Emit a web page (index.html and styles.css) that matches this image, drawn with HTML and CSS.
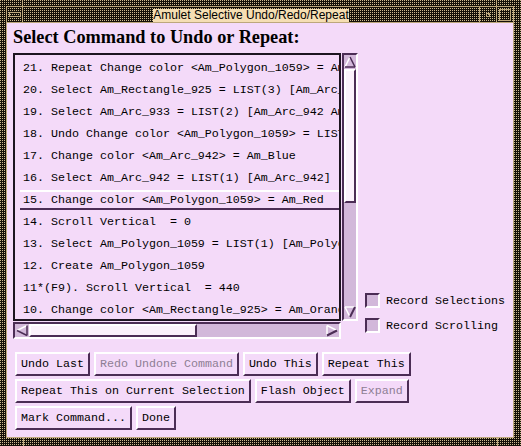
FILE: index.html
```html
<!DOCTYPE html>
<html>
<head>
<meta charset="utf-8">
<link rel="stylesheet" href="styles.css">
</head>
<body>
<div class="window">
  <span class="notch notch-tl"></span>
  <span class="notch notch-tr"></span>
  <span class="notch notch-bl"></span>
  <span class="notch notch-br"></span>
  <div class="frame">
    <div class="titlebar">
      <div class="tb-menu"><span class="menu-bar"></span></div>
      <div class="tb-title"><span class="title-text">Amulet Selective Undo/Redo/Repeat</span></div>
      <div class="tb-min"><span class="min-box"></span></div>
      <div class="tb-max"><span class="max-box"></span></div>
    </div>
    <div class="content">
      <h1 class="heading">Select Command to Undo or Repeat:</h1>
      <div class="main-row">
        <div class="scroll-group">
          <div class="list mono">
            <div class="row">21. Repeat Change color &lt;Am_Polygon_1059&gt; = Am_Red</div>
            <div class="row">20. Select Am_Rectangle_925 = LIST(3) [Am_Arc_942 Am_Arc_933]</div>
            <div class="row">19. Select Am_Arc_933 = LIST(2) [Am_Arc_942 Am_Arc_933]</div>
            <div class="row">18. Undo Change color &lt;Am_Polygon_1059&gt; = LIST</div>
            <div class="row">17. Change color &lt;Am_Arc_942&gt; = Am_Blue</div>
            <div class="row">16. Select Am_Arc_942 = LIST(1) [Am_Arc_942]</div>
            <div class="row selected">15. Change color &lt;Am_Polygon_1059&gt; = Am_Red</div>
            <div class="row">14. Scroll Vertical  = 0</div>
            <div class="row">13. Select Am_Polygon_1059 = LIST(1) [Am_Polygon_1059]</div>
            <div class="row">12. Create Am_Polygon_1059</div>
            <div class="row">11*(F9). Scroll Vertical  = 440</div>
            <div class="row">10. Change color &lt;Am_Rectangle_925&gt; = Am_Orange</div>
          </div>
          <div class="vscroll">
            <div class="arrow arrow-v">
              <svg width="12" height="14" viewBox="0 0 12 14">
                <polygon points="6,2 1,12 11,12" fill="#d2b8da"/>
                <line x1="6" y1="2" x2="1" y2="12" stroke="#ffffff" stroke-width="1.5"/>
                <line x1="6" y1="2" x2="11" y2="12" stroke="#4b2d55" stroke-width="1.5"/>
                <line x1="1" y1="12" x2="11" y2="12" stroke="#4b2d55" stroke-width="1.5"/>
              </svg>
            </div>
            <div class="vthumb"></div>
            <div class="vtrough"></div>
            <div class="arrow arrow-v">
              <svg width="12" height="14" viewBox="0 0 12 14">
                <polygon points="1,2 11,2 6,12" fill="#d2b8da"/>
                <line x1="1" y1="2" x2="11" y2="2" stroke="#ffffff" stroke-width="1.5"/>
                <line x1="1" y1="2" x2="6" y2="12" stroke="#ffffff" stroke-width="1.5"/>
                <line x1="11" y1="2" x2="6" y2="12" stroke="#4b2d55" stroke-width="2"/>
              </svg>
            </div>
          </div>
          <div class="hscroll">
            <div class="arrow arrow-h">
              <svg width="14" height="13" viewBox="0 0 14 13">
                <polygon points="2,6.5 12,1.5 12,11.5" fill="#d2b8da"/>
                <line x1="2" y1="6.5" x2="12" y2="1.5" stroke="#ffffff" stroke-width="1.5"/>
                <line x1="2" y1="6.5" x2="12" y2="11.5" stroke="#4b2d55" stroke-width="1.5"/>
                <line x1="12" y1="1.5" x2="12" y2="11.5" stroke="#4b2d55" stroke-width="1.5"/>
              </svg>
            </div>
            <div class="hthumb"></div>
            <div class="htrough"></div>
            <div class="arrow arrow-h">
              <svg width="14" height="13" viewBox="0 0 14 13">
                <polygon points="2,1.5 12,6.5 2,11.5" fill="#d2b8da"/>
                <line x1="2" y1="1.5" x2="2" y2="11.5" stroke="#ffffff" stroke-width="1.5"/>
                <line x1="2" y1="1.5" x2="12" y2="6.5" stroke="#ffffff" stroke-width="1.5"/>
                <line x1="2" y1="11.5" x2="12" y2="6.5" stroke="#4b2d55" stroke-width="2"/>
              </svg>
            </div>
          </div>
        </div>
        <div class="options mono">
          <div class="check"><span class="box"></span><span class="check-label">Record Selections</span></div>
          <div class="check"><span class="box"></span><span class="check-label">Record Scrolling</span></div>
        </div>
      </div>
      <div class="buttons mono">
        <div class="btn-row">
          <span class="btn">Undo Last</span>
          <span class="btn disabled">Redo Undone Command</span>
          <span class="btn">Undo This</span>
          <span class="btn">Repeat This</span>
        </div>
        <div class="btn-row">
          <span class="btn">Repeat This on Current Selection</span>
          <span class="btn">Flash Object</span>
          <span class="btn disabled">Expand</span>
        </div>
        <div class="btn-row">
          <span class="btn">Mark Command...</span>
          <span class="btn">Done</span>
        </div>
      </div>
    </div>
  </div>
</div>
</body>
</html>
```

FILE: styles.css
```css
* { box-sizing: border-box; }
html, body { margin: 0; padding: 0; }
body { width: 521px; height: 446px; overflow: hidden; background: #141008; }

.window {
  position: relative;
  width: 521px;
  height: 446px;
  padding: 6px 7px 8px 6px;
  background-color: #141008;
  background-image: conic-gradient(from 0deg at 1px 1px, #141008 0deg 270deg, #cdb98f 270deg 360deg);
  background-size: 2px 2px;
  display: flex;
}

.notch { position: absolute; background: #bca77c; width: 1px; }
.notch-tl { left: 22px; top: 0; height: 7px; }
.notch-tr { left: 496px; top: 0; height: 7px; }
.notch-bl { left: 23px; bottom: 0; height: 9px; }
.notch-br { left: 497px; bottom: 0; height: 9px; }

.frame {
  flex: 1;
  border: 1px solid #bca77c;
  display: flex;
  flex-direction: column;
  min-width: 0;
}

.titlebar {
  height: 16px;
  border-bottom: 1px solid #bca77c;
  display: flex;
  flex: none;
}
.tb-menu {
  width: 16px;
  border-right: 1px solid #bca77c;
  display: flex;
  align-items: center;
  justify-content: center;
}
.menu-bar { width: 12px; height: 5px; border: 1px solid #bca77c; }
.tb-title {
  flex: 1;
  display: flex;
  justify-content: center;
  align-items: flex-end;
  border-right: 1px solid #bca77c;
}
.title-text {
  background: #f5deb3;
  color: #000;
  font-family: "Liberation Sans", Arial, sans-serif;
  font-size: 12px;
  line-height: 13px;
  height: 13px;
  white-space: nowrap;
}
.tb-min {
  width: 17px;
  border-right: 1px solid #bca77c;
  display: flex;
  align-items: center;
  justify-content: center;
}
.min-box { width: 4px; height: 4px; border: 1px solid #bca77c; }
.tb-max {
  width: 16px;
  display: flex;
  align-items: center;
  justify-content: center;
}
.max-box { width: 12px; height: 12px; border: 1px solid #bca77c; }

.content {
  flex: 1;
  background: #f4daf9;
  padding: 3px 0 0 6px;
  color: #000;
}

.heading {
  margin: 0;
  font-family: "Liberation Serif", "Times New Roman", serif;
  font-weight: bold;
  font-size: 18.3px;
  line-height: 22px;
  height: 22px;
  white-space: nowrap;
}

.mono {
  font-family: "Liberation Mono", "Courier New", monospace;
  font-size: 11.67px;
}

.main-row {
  margin-top: 5px;
  display: flex;
}

.scroll-group {
  display: grid;
  grid-template-columns: 328px 16px;
  grid-template-rows: 268px 17px;
  column-gap: 1px;
  row-gap: 1px;
}

.list {
  border: 2px solid #1c1420;
  overflow: hidden;
  padding-top: 3px;
}
.row {
  margin: 0 0 2px 5px;
  height: 20px;
  line-height: 16px;
  border-top: 2px solid transparent;
  border-bottom: 2px solid transparent;
  padding-left: 3px;
  white-space: pre;
}
.row.selected {
  border-top-color: #ffffff;
  border-bottom-color: #4b2d55;
}

.vscroll, .hscroll {
  border-top: 2px solid #4b2d55;
  border-left: 2px solid #4b2d55;
  border-bottom: 2px solid #ffffff;
  border-right: 2px solid #ffffff;
  background: #d2b8da;
  display: flex;
}
.vscroll { flex-direction: column; }
.arrow { display: flex; flex: none; background: #d2b8da; }
.arrow svg { display: block; }
.arrow-v { height: 14px; }
.arrow-h { width: 14px; }
.vthumb {
  height: 134px;
  flex: none;
  background: #fbf1fb;
  border-top: 2px solid #ffffff;
  border-left: 2px solid #ffffff;
  border-right: 2px solid #4b2d55;
  border-bottom: 2px solid #4b2d55;
}
.vtrough, .htrough { flex: 1; }
.hscroll { grid-column: 1; }
.hthumb {
  width: 168px;
  flex: none;
  background: #fbf1fb;
  border-top: 2px solid #ffffff;
  border-left: 2px solid #ffffff;
  border-right: 2px solid #4b2d55;
  border-bottom: 2px solid #4b2d55;
}

.options {
  align-self: flex-end;
  margin-left: 7px;
  margin-bottom: 6px;
  display: flex;
  flex-direction: column;
  gap: 10px;
}
.check { display: flex; align-items: center; height: 15px; }
.box {
  width: 15px;
  height: 15px;
  background: #d2b8da;
  border-top: 2px solid #4b2d55;
  border-left: 2px solid #4b2d55;
  border-bottom: 2px solid #ffffff;
  border-right: 2px solid #ffffff;
}
.check-label { margin-left: 6px; white-space: pre; }

.buttons {
  margin-top: 13px;
  margin-left: 2px;
  display: flex;
  flex-direction: column;
  gap: 3px;
}
.btn-row { display: flex; gap: 4px; }
.btn {
  height: 24px;
  line-height: 20px;
  padding: 0 4px;
  border-top: 2px solid #ffffff;
  border-left: 2px solid #ffffff;
  border-bottom: 2px solid #4b2d55;
  border-right: 2px solid #4b2d55;
  white-space: pre;
  background: #f4daf9;
}
.btn.disabled { color: #8e7e94; }
```
